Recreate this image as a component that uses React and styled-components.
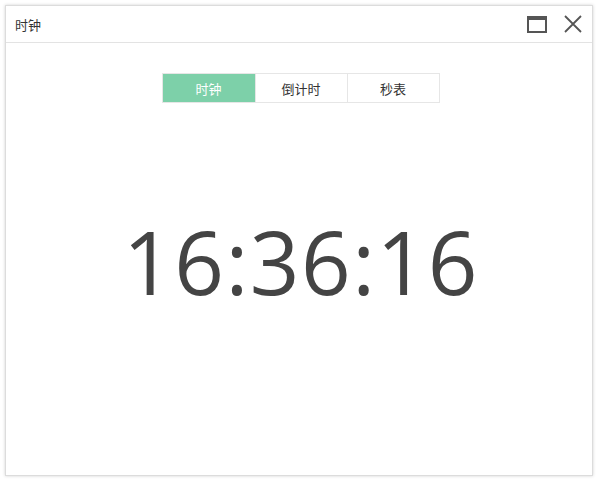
import React, { useState } from "react";
import styled, { createGlobalStyle, css } from "styled-components";

const Global = createGlobalStyle`
  html, body {
    margin: 0;
    padding: 0;
    background: #fff;
  }
  body {
    font-family: "Open Sans", "Noto Sans CJK SC", sans-serif;
  }
`;

const Page = styled.div`
  width: 600px;
  height: 480px;
  padding: 5px 7px 6px 5px;
  box-sizing: border-box;
`;

const Window = styled.div`
  height: 100%;
  background: #fff;
  border: 1px solid #dcdcdc;
  box-shadow: 0 0 3px rgba(0, 0, 0, 0.18);
  display: flex;
  flex-direction: column;
`;

const TitleBar = styled.div`
  height: 36px;
  border-bottom: 1px solid #e3e3e3;
  display: flex;
  align-items: center;
  padding: 0 10px 0 9px;
`;

const Title = styled.span`
  flex: 1;
  font-size: 13px;
  color: #333;
  font-family: "Noto Sans CJK SC", sans-serif;
`;

const IconButton = styled.button`
  border: none;
  background: none;
  padding: 0;
  margin-left: 17px;
  display: flex;
  cursor: pointer;
`;

const Body = styled.div`
  flex: 1;
  display: flex;
  flex-direction: column;
  align-items: center;
  padding-top: 30px;
`;

const Tabs = styled.div`
  display: flex;
  margin-left: 3px;
  border: 1px solid #e6e6e6;
`;

const Tab = styled.button`
  width: 92px;
  height: 28px;
  border: none;
  border-left: 1px solid #e6e6e6;
  background: #fff;
  color: #333;
  font-size: 13px;
  font-family: "Noto Sans CJK SC", sans-serif;
  padding: 0;
  cursor: pointer;
  &:first-child {
    border-left: none;
  }
  ${(props) =>
    props.active &&
    css`
      background: #7dd0a9;
      color: #fff;
    `}
`;

const Clock = styled.div`
  margin-top: 115px;
  margin-left: 4px;
  font-family: "Open Sans", sans-serif;
  font-size: 87px;
  line-height: 1;
  color: #444;
  letter-spacing: 1.5px;
`;

function App() {
  const [tab, setTab] = useState(0);
  const tabs = ["时钟", "倒计时", "秒表"];
  return (
    <>
      <Global />
      <Page>
        <Window>
          <TitleBar>
            <Title>时钟</Title>
            <IconButton>
              <svg width="20" height="17" viewBox="0 0 20 17">
                <rect x="1" y="1" width="18" height="15" fill="none" stroke="#555" strokeWidth="2" />
                <rect x="1" y="1" width="18" height="3" fill="#555" />
              </svg>
            </IconButton>
            <IconButton>
              <svg width="18" height="18" viewBox="0 0 18 18">
                <path d="M1 1L17 17M17 1L1 17" stroke="#555" strokeWidth="1.8" />
              </svg>
            </IconButton>
          </TitleBar>
          <Body>
            <Tabs>
              {tabs.map((t, i) => (
                <Tab key={t} active={i === tab} onClick={() => setTab(i)}>
                  {t}
                </Tab>
              ))}
            </Tabs>
            <Clock>16:36:16</Clock>
          </Body>
        </Window>
      </Page>
    </>
  );
}

export default App;
